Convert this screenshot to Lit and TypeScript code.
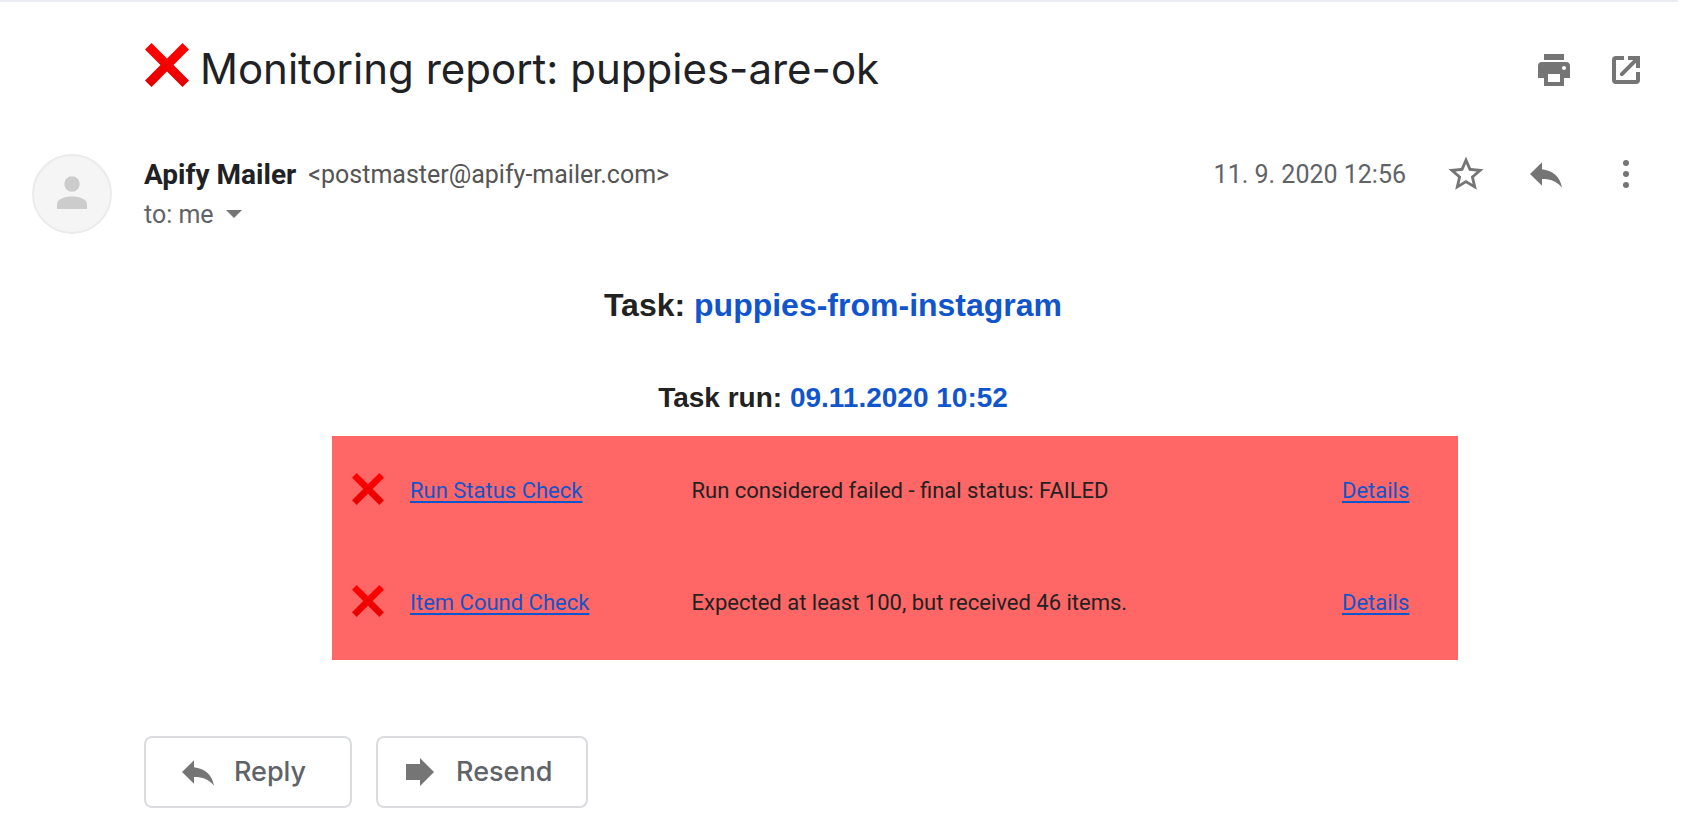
import { LitElement, html, css, svg } from "lit";
import { customElement, property } from "lit/decorators.js";

const glyphs: Record<string, unknown> = {
  print: svg`<path fill-rule="evenodd" d="M10 4h20v6H10zM8 12h24a4 4 0 0 1 4 4v12h-6v8H10v-8H4V16a4 4 0 0 1 4-4zM14 24v8h12v-8zM30 16a2 2 0 1 0 0 4a2 2 0 1 0 0-4z"/>`,
  open: svg`<path d="M18 6v4h-8v20h20v-8h4v8a4 4 0 0 1-4 4H10a4 4 0 0 1-4-4V10a4 4 0 0 1 4-4zM22 6h12v12h-4v-5.200L17 25.800a2 2 0 0 1-2.800-2.800L27.200 10H22z"/>`,
  star: svg`<path transform="translate(-1 -1) scale(1.750)" d="M22 9.240l-7.190-.62L12 2 9.190 8.630 2 9.240l5.460 4.730L5.820 21 12 17.270 18.180 21l-1.630-7.030L22 9.240zM12 15.400l-3.760 2.270 1-4.280-3.320-2.880 4.380-.38L12 6.100l1.710 4.040 4.380.38-3.320 2.880 1 4.280L12 15.400z"/>`,
  reply: svg`<path d="M4 20L16 8.300V15.300C26 16.500 34 22 36 33.700C31 27.500 25 25 16 25V31.700z"/>`,
  forward: svg`<path d="M6 12h14V6l14 14-14 14v-6H6z"/>`,
  more: svg`<circle cx="20" cy="9" r="3"/><circle cx="20" cy="20" r="3"/><circle cx="20" cy="31" r="3"/>`,
};

/** Single-colour 40px glyph. */
@customElement("mail-icon")
class MailIcon extends LitElement {
  @property() name = "";
  static styles = css`
    :host { display: block; flex: none; width: 40px; height: 40px; }
    svg { display: block; width: 100%; height: 100%; fill: #757575; }
  `;
  render() {
    return html`<svg viewBox="0 0 40 40" aria-hidden="true">${glyphs[this.name]}</svg>`;
  }
}

/** Red failure cross; its size comes from the host. */
@customElement("fail-cross")
class FailCross extends LitElement {
  static styles = css`
    :host { display: block; flex: none; }
    svg { display: block; width: 100%; height: 100%; }
  `;
  render() {
    return html`<svg viewBox="0 0 44 44" role="img" aria-label="Failed">
      <defs>
        <linearGradient id="g" x1="0" y1="0" x2="0" y2="1">
          <stop offset="0.2" stop-color="#ff0000" /><stop offset="0.9" stop-color="#e60000" />
        </linearGradient>
      </defs>
      <path fill="url(#g)" d="M6.500 0L22 15.500 37.500 0 44 6.500 28.500 22 44 37.500 37.500 44 22 28.500 6.500 44 0 37.500 15.500 22 0 6.500z" />
    </svg>`;
  }
}

const checks = [
  { name: "Run Status Check", message: "Run considered failed - final status: FAILED" },
  { name: "Item Cound Check", message: "Expected at least 100, but received 46 items." },
];

@customElement("app-root")
class AppRoot extends LitElement {
  static styles = css`
    :host {
      display: block;
      font-family: Roboto, "Liberation Sans", sans-serif;
      color: #202124;
      background: #fff;
    }
    * { box-sizing: border-box; }
    h1, h2, h3 { margin: 0; }
    button { margin: 0; padding: 0; border: 0; background: none; font: inherit; color: inherit; cursor: pointer; }
    a { color: #1155cc; }
    .message { margin-right: 8px; border-top: 2px solid #e9edf2; }
    .subject {
      display: flex; align-items: center; gap: 32px;
      padding: 40px 32px 0 145px;
    }
    .title {
      flex: 1; display: flex; align-items: center; gap: 11px;
      height: 56px; padding-bottom: 2px;
      font: 400 42px/54px Inter, sans-serif;
    }
    .title fail-cross { width: 44px; height: 44px; margin-bottom: 8px; }
    .header {
      display: grid; grid-template-columns: 80px 1fr auto; column-gap: 32px;
      padding: 56px 32px 0;
    }
    .avatar {
      width: 80px; height: 80px; border-radius: 50%;
      background: #f5f5f5; border: 2px solid #ebebeb;
      display: grid; place-items: center;
    }
    .avatar svg { width: 32px; height: 36px; fill: #ccc; }
    .from { display: flex; align-items: center; gap: 12px; height: 40px; }
    .name { font-size: 28px; font-weight: 700; }
    .email { font-size: 25px; color: #555; }
    .to { display: flex; align-items: center; gap: 12px; height: 40px; font-size: 25px; color: #5f6368; }
    .caret { width: 16px; height: 8px; fill: #757575; }
    .actions { display: flex; align-items: center; gap: 40px; height: 40px; }
    .date { font-size: 25px; color: #5f6368; }
    .body { padding: 51px 156px 0 144px; }
    .body h2, .body h3 {
      text-align: center; color: #222;
      font-family: "Liberation Sans", Arial, sans-serif; font-weight: 700;
    }
    .body h2 { font-size: 32px; line-height: 40px; }
    .body h3 { font-size: 28px; line-height: 40px; margin-top: 53px; }
    .body h2 a, .body h3 a { text-decoration: none; }
    .checks { padding: 18px 64px 0 188px; }
    table {
      width: 100%; border-collapse: collapse; table-layout: fixed;
      background: #ff6666; color: #222; font-size: 22px; line-height: 28px;
    }
    td { height: 112px; padding: 0 0 2px; vertical-align: middle; }
    td a { text-decoration-thickness: 2px; text-underline-offset: 3px; }
    .c-icon { width: 78px; }
    .c-name { width: 25%; }
    .c-more { width: 116px; }
    td fail-cross { width: 32px; height: 32px; margin: 0 0 4px 20px; }
    .replies { display: flex; gap: 24px; padding: 76px 32px 20px 144px; }
    .pill {
      display: flex; align-items: center; justify-content: center; gap: 16px;
      min-width: 208px; height: 72px; padding: 0 34px 0 22px;
      border: 2px solid #dadce0; border-radius: 8px;
      font: 500 27px/36px Inter, sans-serif; color: #5f6368;
    }
  `;

  render() {
    return html`
      <main class="message">
        <header class="subject">
          <h1 class="title"><fail-cross></fail-cross><span>Monitoring report: puppies-are-ok</span></h1>
          <button aria-label="Print"><mail-icon name="print"></mail-icon></button>
          <button aria-label="Open in new window"><mail-icon name="open"></mail-icon></button>
        </header>
        <section class="header">
          <div class="avatar">
            <svg viewBox="0 0 32 36" aria-hidden="true">
              <circle cx="16" cy="8" r="7.700" /><path d="M1 33v-5c0-5 8-7.500 15-7.500s15 2.500 15 7.500v5z" />
            </svg>
          </div>
          <div>
            <div class="from"><span class="name">Apify Mailer</span><span class="email">&lt;postmaster@apify-mailer.com&gt;</span></div>
            <button class="to">to: me <svg class="caret" viewBox="0 0 16 8" aria-hidden="true"><path d="M0 0h16L8 8z" /></svg></button>
          </div>
          <div class="actions">
            <span class="date">11. 9. 2020 12:56</span>
            <button aria-label="Star"><mail-icon name="star"></mail-icon></button>
            <button aria-label="Reply"><mail-icon name="reply"></mail-icon></button>
            <button aria-label="More"><mail-icon name="more"></mail-icon></button>
          </div>
        </section>
        <section class="body">
          <h2>Task: <a href="#">puppies-from-instagram</a></h2>
          <h3>Task run: <a href="#">09.11.2020 10:52</a></h3>
          <div class="checks">
            <table>
              <colgroup><col class="c-icon" /><col class="c-name" /><col /><col class="c-more" /></colgroup>
              <tbody>
                ${checks.map((c) => html`<tr>
                  <td><fail-cross></fail-cross></td>
                  <td><a href="#">${c.name}</a></td>
                  <td>${c.message}</td>
                  <td><a href="#">Details</a></td>
                </tr>`)}
              </tbody>
            </table>
          </div>
        </section>
        <footer class="replies">
          <button class="pill"><mail-icon name="reply"></mail-icon>Reply</button>
          <button class="pill"><mail-icon name="forward"></mail-icon>Resend</button>
        </footer>
      </main>
    `;
  }
}
